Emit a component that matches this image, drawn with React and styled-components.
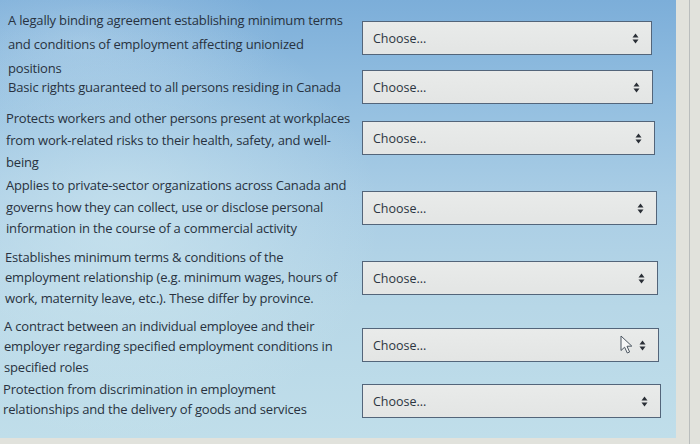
import React from 'react';
import styled, { createGlobalStyle } from 'styled-components';

const GlobalStyle = createGlobalStyle`
    html, body {
        margin: 0;
        padding: 0;
        background: #e1e2dc;
    }
    body {
        font-family: 'Open Sans', 'Noto Sans', sans-serif;
        -webkit-font-smoothing: antialiased;
    }
`;

const items = [
    {
        lines: [
            'A legally binding agreement establishing minimum terms',
            'and conditions of employment affecting unionized',
            'positions'
        ],
        labelTop: 0,
        lineHeight: 24,
        indent: 8,
        selectTop: 0,
        width: 290
    },
    {
        lines: ['Basic rights guaranteed to all persons residing in Canada'],
        labelTop: -4,
        lineHeight: 22,
        indent: 8,
        selectTop: 15,
        width: 291
    },
    {
        lines: [
            'Protects workers and other persons present at workplaces',
            'from work-related risks to their health, safety, and well-',
            'being'
        ],
        labelTop: 9,
        lineHeight: 22,
        indent: 6,
        selectTop: 17,
        width: 293
    },
    {
        lines: [
            'Applies to private-sector organizations across Canada and',
            'governs how they can collect, use or disclose personal',
            'information in the course of a commercial activity'
        ],
        labelTop: 2.25,
        lineHeight: 21.5,
        indent: 6,
        selectTop: 36,
        width: 295
    },
    {
        lines: [
            'Establishes minimum terms & conditions of the',
            'employment relationship (e.g. minimum wages, hours of',
            'work, maternity leave, etc.). These differ by province.'
        ],
        labelTop: 7,
        lineHeight: 20.5,
        indent: 5,
        selectTop: 36,
        width: 296
    },
    {
        lines: [
            'A contract between an individual employee and their',
            'employer regarding specified employment conditions in',
            'specified roles'
        ],
        labelTop: 7.5,
        lineHeight: 20.5,
        indent: 4,
        selectTop: 33,
        width: 297,
        hovered: true
    },
    {
        lines: [
            'Protection from discrimination in employment',
            'relationships and the delivery of goods and services'
        ],
        labelTop: 1.75,
        lineHeight: 20,
        indent: 3,
        selectTop: 22,
        width: 299
    }
];

const Page = styled.div`
    display: flex;
    width: 700px;
    height: 444px;
    overflow: hidden;
    background: #e1e2dc;
`;

const Panel = styled.div`
    display: flex;
    width: 676px;
    height: 438px;
    flex-shrink: 0;
    background:
        radial-gradient(ellipse 260px 220px at 120px 220px, rgba(214, 236, 242, 0.55), rgba(214, 236, 242, 0) 100%),
        radial-gradient(ellipse 200px 90px at 80px 40px, rgba(200, 224, 240, 0.35), rgba(200, 224, 240, 0) 100%),
        linear-gradient(180deg, #7caed9 0%, #92bee0 22%, #a9cde5 45%, #b7d7e7 70%, #c0deea 100%);
`;

const Gutter = styled.div`
    width: 13px;
    flex-shrink: 0;
    border-right: 1px solid #b9bdbd;
`;

const LabelColumn = styled.div`
    display: flex;
    flex-direction: column;
    width: 362px;
    flex-shrink: 0;
    padding-top: 8px;
`;

const Label = styled.div`
    margin-top: ${props => props.$top}px;
    padding-left: ${props => props.$indent}px;
    font-size: 13px;
    letter-spacing: -0.18px;
    line-height: ${props => props.$lineHeight}px;
    color: #283240;
`;

const Line = styled.span`
    display: block;
    white-space: nowrap;
`;

const SelectColumn = styled.div`
    display: flex;
    flex-direction: column;
    align-items: flex-start;
    padding-top: 21px;
`;

const SelectBox = styled.div`
    position: relative;
    display: flex;
    align-items: center;
    justify-content: space-between;
    box-sizing: border-box;
    width: ${props => props.$width}px;
    height: 34px;
    margin-top: ${props => props.$top}px;
    padding: 0 12px 0 10px;
    background: linear-gradient(180deg, #e9ebea 0%, #e3e5e4 100%);
    border: 1px solid #53657a;
    font-size: 12.5px;
    color: #2c3541;
`;

const Arrows = styled.svg`
    width: 7px;
    height: 11px;
    flex-shrink: 0;
`;

const Pointer = styled.svg`
    position: absolute;
    right: 25px;
    top: 6px;
    width: 13px;
    height: 19px;
`;

const SortArrows = () =>
    <Arrows viewBox="0 0 7 11">
        <path d="M3.5 0.5 L6.5 4.5 L0.5 4.5 Z" fill="#2a2f36" />
        <path d="M0.5 6.5 L6.5 6.5 L3.5 10.5 Z" fill="#2a2f36" />
    </Arrows>;

const MousePointer = () =>
    <Pointer viewBox="0 0 13 19">
        <path
            d="M1 1 L1 15.5 L4.6 12.2 L7.3 18 L9.6 17 L7 11.3 L11.8 11.1 Z"
            fill="#f6f7f7"
            stroke="#4b5560"
            strokeWidth="1"
            strokeLinejoin="round"
        />
    </Pointer>;

const App = () =>
    <Page>
        <GlobalStyle />
        <Panel>
            <LabelColumn>
                {items.map((item, i) =>
                    <Label
                        key={i}
                        $top={item.labelTop}
                        $indent={item.indent}
                        $lineHeight={item.lineHeight}
                    >
                        {item.lines.map(line =>
                            <Line key={line}>{line}</Line>
                        )}
                    </Label>
                )}
            </LabelColumn>
            <SelectColumn>
                {items.map((item, i) =>
                    <SelectBox key={i} $top={item.selectTop} $width={item.width}>
                        <span>Choose...</span>
                        {item.hovered && <MousePointer />}
                        <SortArrows />
                    </SelectBox>
                )}
            </SelectColumn>
        </Panel>
        <Gutter />
    </Page>;

export default App;
